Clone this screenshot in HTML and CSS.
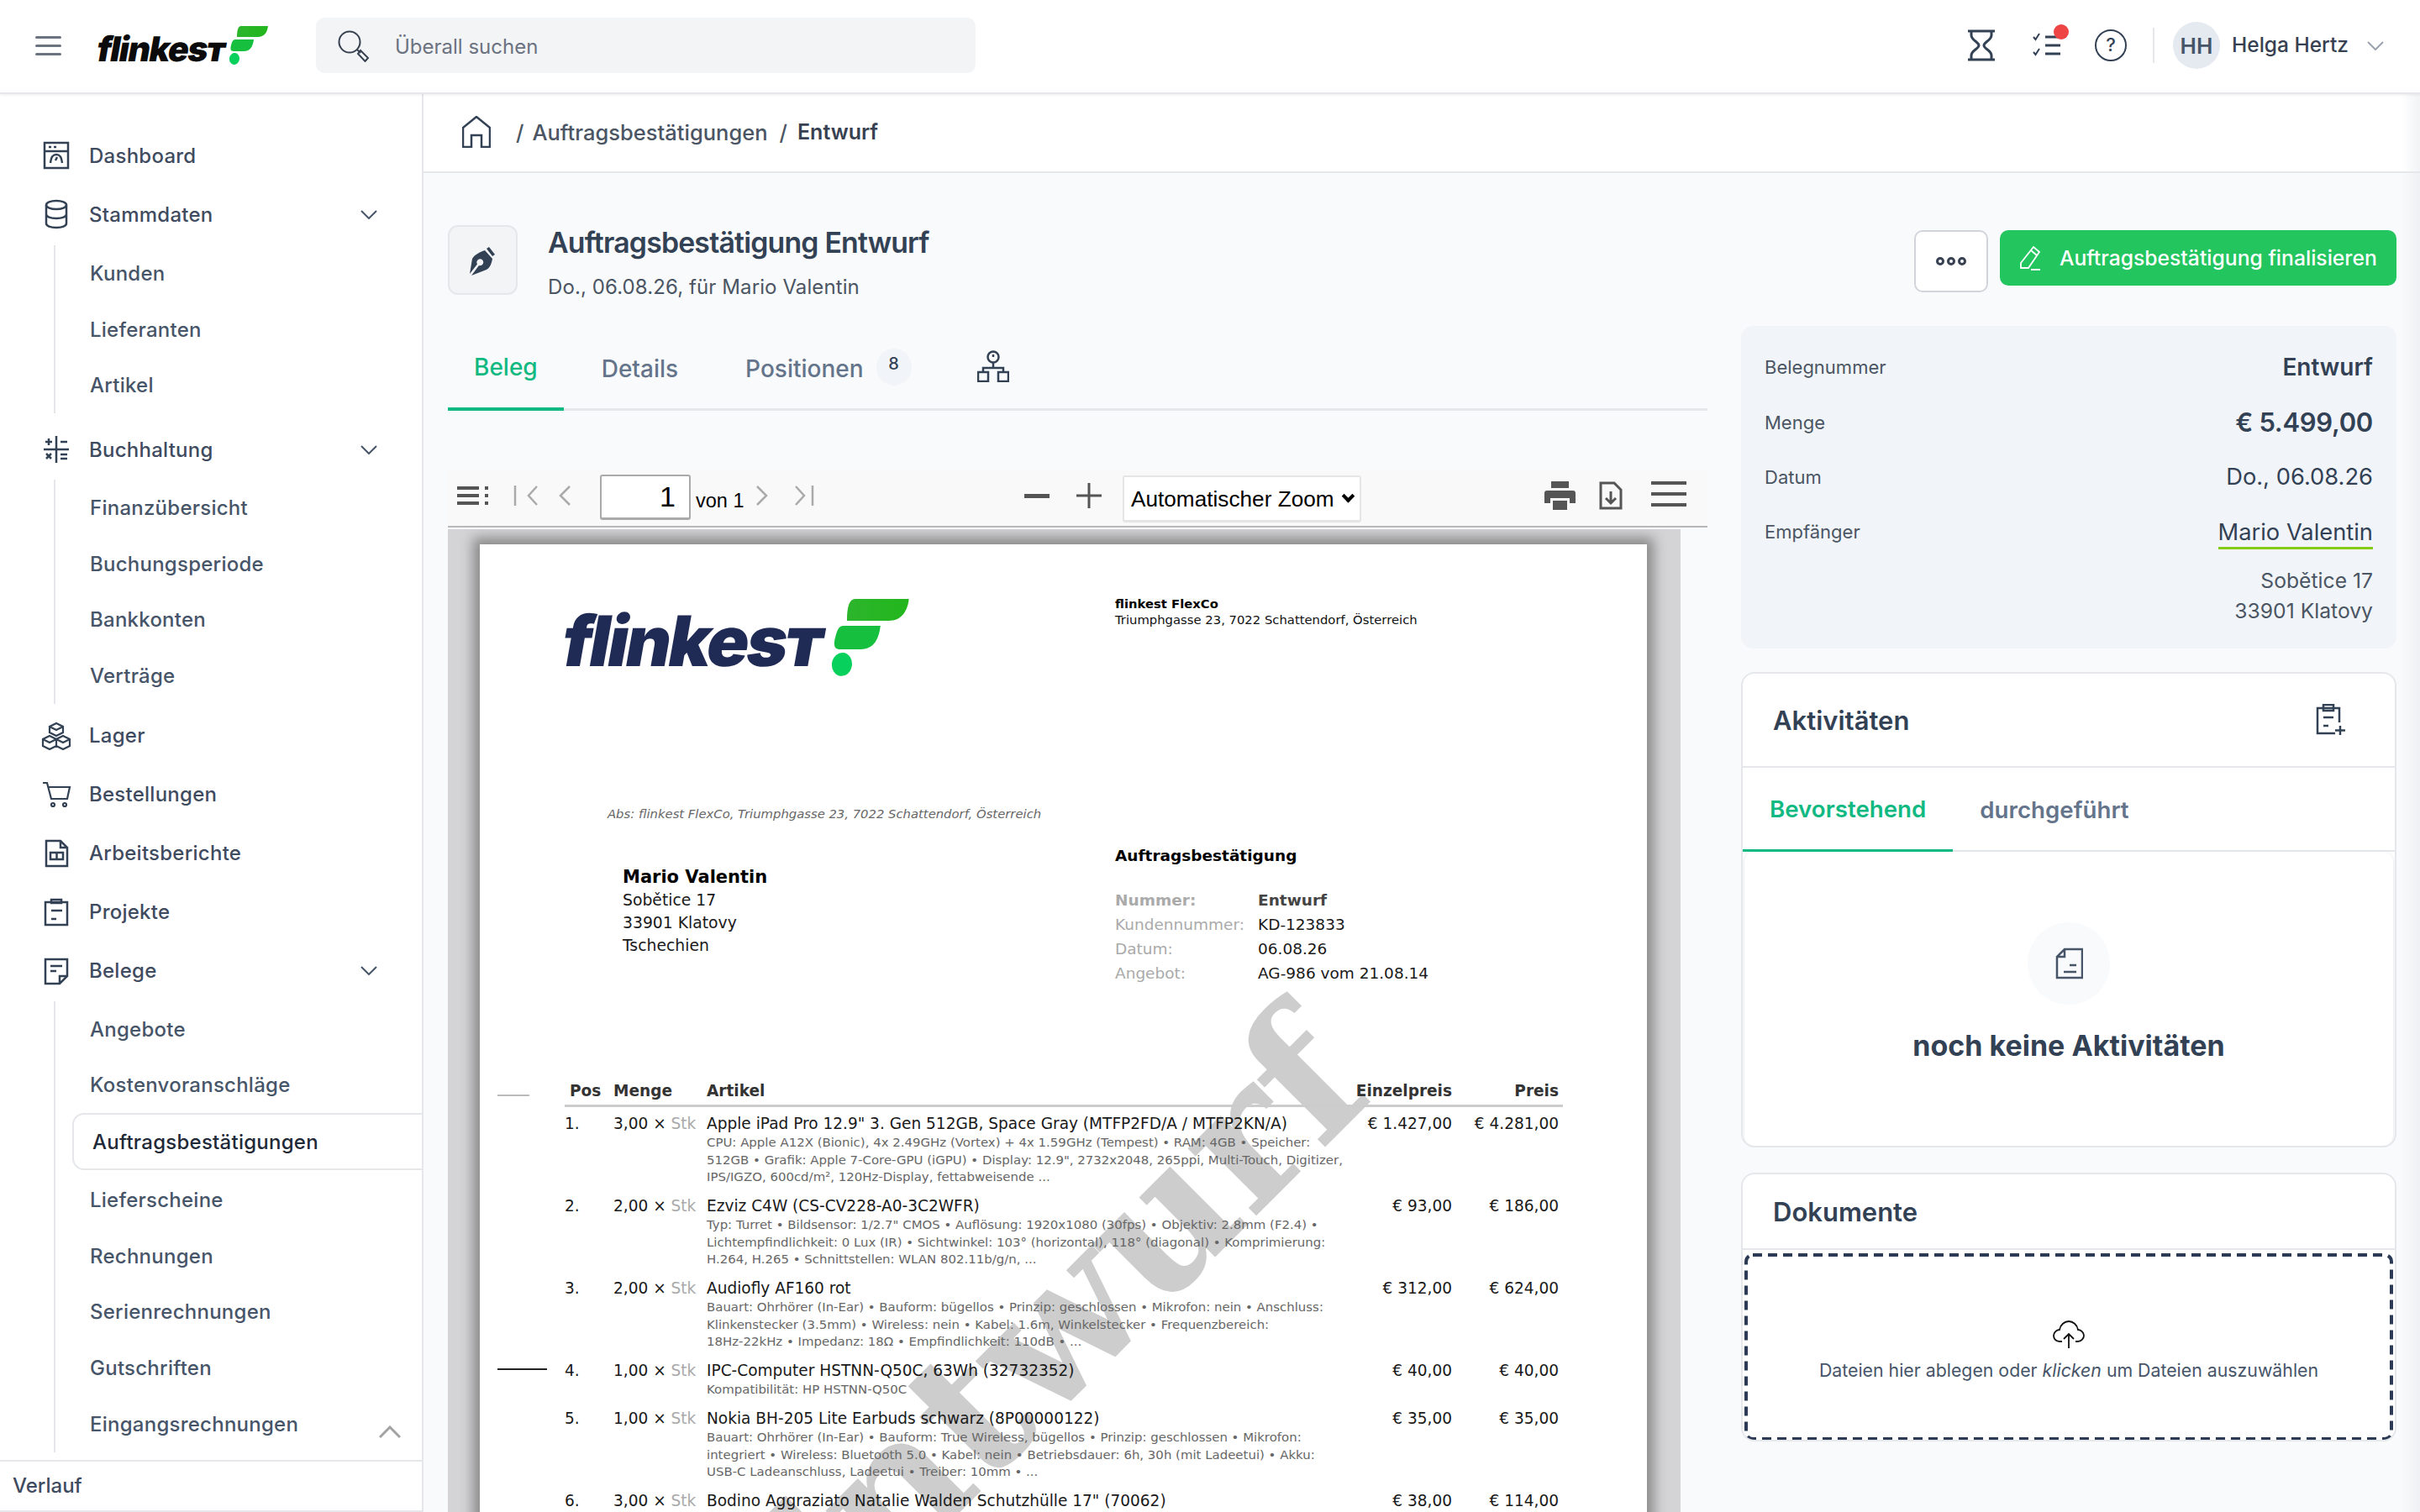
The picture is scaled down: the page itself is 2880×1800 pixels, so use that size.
FILE: index.html
```html
<!DOCTYPE html>
<html lang="de">
  <head>
    <meta charset="UTF-8" />
    <title>Auftragsbestätigung Entwurf</title>
    <link rel="stylesheet" href="styles.css" />
  </head>
  <body>
    <svg class="defs" width="0" height="0">
      <defs>
        <linearGradient id="leafTop" x1="0" y1="0" x2="1" y2="0">
          <stop offset="0" stop-color="#2cb52c" />
          <stop offset="1" stop-color="#22b61c" />
        </linearGradient>
        <symbol id="leaves" viewBox="0 0 47 46">
          <path d="M15 0H47C46 8 42 13 35 13H10C10 6 11 0 15 0Z" fill="url(#leafTop)" />
          <path d="M8 16H30C29 24 26 30 18 30H6C2 30 2 27 3 23C4 19 5 16 8 16Z" fill="#16c03e" />
          <ellipse cx="7" cy="39" rx="6" ry="7" transform="rotate(8 7 39)" fill="#07d15c" />
        </symbol>
      </defs>
    </svg>

    <header class="topbar">
      <div class="burger"><span></span><span></span><span></span></div>
      <div class="logo">
        <span class="logo-text">flinkes<span class="logo-t">t</span></span>
        <svg class="logo-leaves"><use href="#leaves" /></svg>
      </div>
      <div class="search">
        <svg class="search-icon" viewBox="0 0 38 38" fill="none" stroke="#374151" stroke-width="2">
          <circle cx="14" cy="14" r="12.5" />
          <path d="M23 23l4 4M27 24l9 9-3.500 4-8.500-9z" />
        </svg>
        <span>Überall suchen</span>
      </div>
      <div class="top-right">
        <svg class="ti-hour" viewBox="0 0 32 38" fill="none" stroke="#334155" stroke-width="3">
          <path d="M0 2H32M0 36H32M4 2V7C4 13 13 15 13 19C13 23 4 25 4 31V36M28 2V7C28 13 19 15 19 19C19 23 28 25 28 31V36" />
        </svg>
        <div class="tasks">
          <svg viewBox="0 0 34 30" fill="none" stroke="#334155">
            <path d="M15 5H33M15 15H33M15 25H33" stroke-width="3" />
            <path d="M1 5l2.500 3L8 1M1 23l2.500 3L8 19" stroke-width="2" />
          </svg>
          <span class="red-dot"></span>
        </div>
        <div class="help">?</div>
        <div class="divider"></div>
        <div class="avatar">HH</div>
        <span class="user-name">Helga Hertz</span>
        <svg class="chev user-chev" viewBox="0 0 20 11" fill="none" stroke="#9ca3af" stroke-width="2"><path d="M1 1l9 9 9-9" /></svg>
      </div>
    </header>

    <div class="shell">
      <aside class="sidebar">
        <nav class="nav">
          <a class="nav-row">
            <svg class="nav-icon" viewBox="0 0 36 36" fill="none" stroke="#334155" stroke-width="2.500">
              <rect x="4" y="3" width="28" height="30" />
              <path d="M4 13H32" />
              <path d="M9 8h3M15 8h3M11 27c1-9 4-10 7-10s6 1 7 10M17 24l2-4" />
            </svg>
            Dashboard
          </a>
          <a class="nav-row">
            <svg class="nav-icon" viewBox="0 0 36 36" fill="none" stroke="#334155" stroke-width="2.500">
              <ellipse cx="18" cy="7" rx="12" ry="5" />
              <path d="M6 7V29C6 32 11 34 18 34S30 32 30 29V7M6 18C6 21 11 23 18 23S30 21 30 18" />
              <path d="M14 16v.1M14 27v.1" />
            </svg>
            Stammdaten
            <svg class="chev" viewBox="0 0 20 11" fill="none" stroke="#475569" stroke-width="2"><path d="M1 1l9 9 9-9" /></svg>
          </a>
          <div class="sub sub-first">
            <a class="sub-row">Kunden</a>
            <a class="sub-row">Lieferanten</a>
            <a class="sub-row">Artikel</a>
          </div>
          <a class="nav-row">
            <svg class="nav-icon" viewBox="0 0 36 36" fill="none" stroke="#334155" stroke-width="2.500">
              <path d="M18 2V34M3 18H33M5 9h8M9 5v8M23 9h8M6 23l6 6M12 23l-6 6M23 24h8M23 29h8" />
            </svg>
            Buchhaltung
            <svg class="chev" viewBox="0 0 20 11" fill="none" stroke="#475569" stroke-width="2"><path d="M1 1l9 9 9-9" /></svg>
          </a>
          <div class="sub">
            <a class="sub-row">Finanzübersicht</a>
            <a class="sub-row">Buchungsperiode</a>
            <a class="sub-row">Bankkonten</a>
            <a class="sub-row">Verträge</a>
          </div>
          <a class="nav-row">
            <svg class="nav-icon" viewBox="0 0 36 36" fill="none" stroke="#334155" stroke-width="2.200">
              <path d="M18 3l8 4v7l-8 4-8-4V7zM10 7l8 4 8-4M10 18l8 4v8l-8 4-8-4v-8zM2 22l8 4 8-4M26 18l8 4v8l-8 4-8-4v-8zM18 22l8 4 8-4" />
            </svg>
            Lager
          </a>
          <a class="nav-row">
            <svg class="nav-icon" viewBox="0 0 36 36" fill="none" stroke="#334155" stroke-width="2.200">
              <path d="M2 4h5l5 19h19l3-14H8" />
              <circle cx="14" cy="30" r="2" />
              <circle cx="28" cy="30" r="2" />
            </svg>
            Bestellungen
          </a>
          <a class="nav-row">
            <svg class="nav-icon" viewBox="0 0 36 36" fill="none" stroke="#334155" stroke-width="2.500">
              <path d="M6 3H23L31 11V33H6zM23 3V11H31" />
              <path d="M11 17H26V25H11zM18.500 17V25" />
            </svg>
            Arbeitsberichte
          </a>
          <a class="nav-row">
            <svg class="nav-icon" viewBox="0 0 36 36" fill="none" stroke="#334155" stroke-width="2.500">
              <rect x="5" y="6" width="26" height="27" />
              <rect x="12" y="3" width="12" height="4" />
              <path d="M12 16H25M12 26H18" />
            </svg>
            Projekte
          </a>
          <a class="nav-row">
            <svg class="nav-icon" viewBox="0 0 36 36" fill="none" stroke="#334155" stroke-width="2.500">
              <path d="M5 4H31V24L22 33H5zM31 24H22V33M11 12H25M11 18H18" />
            </svg>
            Belege
            <svg class="chev" viewBox="0 0 20 11" fill="none" stroke="#475569" stroke-width="2"><path d="M1 1l9 9 9-9" /></svg>
          </a>
          <div class="sub">
            <a class="sub-row">Angebote</a>
            <a class="sub-row">Kostenvoranschläge</a>
            <a class="sub-row sub-active">Auftragsbestätigungen</a>
            <a class="sub-row">Lieferscheine</a>
            <a class="sub-row">Rechnungen</a>
            <a class="sub-row">Serienrechnungen</a>
            <a class="sub-row">Gutschriften</a>
            <a class="sub-row">Eingangsrechnungen</a>
          </div>
        </nav>
        <svg class="scroll-up" viewBox="0 0 26 15" fill="none" stroke="#a3a3a3" stroke-width="3"><path d="M1 14L13 2l12 12" /></svg>
        <div class="verlauf">Verlauf</div>
      </aside>

      <main class="main">
        <div class="crumbs">
          <svg class="home" viewBox="0 0 34 38" fill="none" stroke="#334155" stroke-width="2.500">
            <path d="M1 37V14L17 1l16 13V37H23V23H11V37z" />
          </svg>
          <span class="sep">/</span>
          <span>Auftragsbestätigungen</span>
          <span class="sep sep2">/</span>
          <strong>Entwurf</strong>
        </div>

        <div class="content">
          <div class="page-head">
            <div class="head-icon">
              <svg viewBox="0 0 36 40" fill="#334155">
                <path d="M24 4l7 9-3 2-7-9zM19 8l9 10c-1 6-3 11-7 13L3 38l9-12a4 4 0 1 0-2-1.500L1 36l3-18c3-5 9-8 15-10z" />
              </svg>
            </div>
            <div class="head-text">
              <h1>Auftragsbestätigung Entwurf</h1>
              <p>Do., 06.08.26, für Mario Valentin</p>
            </div>
            <button class="btn-more"><span></span><span></span><span></span></button>
            <button class="btn-green">
              <svg viewBox="0 0 26 32" fill="none" stroke="#fff" stroke-width="1.800">
                <path d="M2 22L17 3l7 6-13 19H2zM14 7l7 6M14 30h11" />
              </svg>
              Auftragsbestätigung finalisieren
            </button>
          </div>

          <div class="columns">
            <section class="left">
              <div class="tabs">
                <a class="tab tab-on">Beleg</a>
                <a class="tab">Details</a>
                <a class="tab tab-pos">Positionen <span class="count">8</span></a>
                <svg class="tab-org" viewBox="0 0 38 38" fill="none" stroke="#334155" stroke-width="2.500">
                  <circle cx="19" cy="8" r="6.500" />
                  <path d="M19 5v3M19 15V21M7 26V21H31V26" />
                  <rect x="1" y="26" width="12" height="11" />
                  <rect x="25" y="26" width="12" height="11" />
                </svg>
              </div>

              <div class="pdf-bar">
                <svg class="pb-side" viewBox="0 0 37 22" fill="#555">
                  <path d="M0 0h26v4H0zM0 9h26v4H0zM0 18h26v4H0zM33 0h4v4h-4zM33 9h4v4h-4zM33 18h4v4h-4z" />
                </svg>
                <svg class="pb-nav pb-first" viewBox="0 0 30 24" fill="none" stroke="#aaa" stroke-width="2.500"><path d="M2 0V24M28 1L18 12l10 11" /></svg>
                <svg class="pb-nav pb-prev" viewBox="0 0 15 24" fill="none" stroke="#aaa" stroke-width="2.500"><path d="M14 1L3 12l11 11" /></svg>
                <div class="pb-page">1</div>
                <span class="pb-of">von 1</span>
                <svg class="pb-nav pb-next" viewBox="0 0 15 24" fill="none" stroke="#aaa" stroke-width="2.500"><path d="M1 1l11 11L1 23" /></svg>
                <svg class="pb-nav pb-last" viewBox="0 0 24 24" fill="none" stroke="#aaa" stroke-width="2.500"><path d="M22 0V24M2 1l10 11L2 23" /></svg>
                <div class="pb-minus"></div>
                <svg class="pb-plus" viewBox="0 0 30 30" fill="#555"><path d="M13.500 0h3v13.500H30v3H16.500V30h-3V16.500H0v-3h13.500z" /></svg>
                <div class="pb-select">Automatischer Zoom <span class="pb-arrow"></span></div>
                <svg class="pb-print" viewBox="0 0 37 34" fill="#555">
                  <path d="M8 0h21v8H8zM3 11h31a3 3 0 0 1 3 3v12h-7v-6H7v6H0V14a3 3 0 0 1 3-3zM10 23h17v11H10z" />
                </svg>
                <svg class="pb-save" viewBox="0 0 28 34" fill="none" stroke="#555" stroke-width="3">
                  <path d="M2 2H18L26 10V32H2zM14 12V26M8 20l6 6 6-6" />
                </svg>
                <svg class="pb-menu" viewBox="0 0 42 30" fill="#555"><path d="M0 0h42v4H0zM0 13h42v4H0zM0 26h42v4H0z" /></svg>
              </div>

              <div class="viewer">
                <div class="sheet">
                  <div class="mark">Entwurf</div>
                  <div class="fold fold-a"></div>
                  <div class="fold fold-b"></div>

                  <div class="doc-head">
                    <div class="doc-logo">
                      <span class="doc-logo-text">flinkes<span class="logo-t">t</span></span>
                      <svg class="doc-leaves"><use href="#leaves" /></svg>
                    </div>
                    <div class="doc-sender">
                      <b>flinkest FlexCo</b><br />
                      Triumphgasse 23, 7022 Schattendorf, Österreich
                    </div>
                  </div>

                  <div class="doc-abs">Abs: flinkest FlexCo, Triumphgasse 23, 7022 Schattendorf, Österreich</div>

                  <div class="doc-info">
                    <div class="doc-addr">
                      <b>Mario Valentin</b><br />
                      Sobětice 17<br />
                      33901 Klatovy<br />
                      Tschechien
                    </div>
                    <div class="doc-meta">
                      <h2>Auftragsbestätigung</h2>
                      <dl>
                        <dt class="meta-strong">Nummer:</dt><dd class="meta-strong">Entwurf</dd>
                        <dt>Kundennummer:</dt><dd>KD-123833</dd>
                        <dt>Datum:</dt><dd>06.08.26</dd>
                        <dt>Angebot:</dt><dd>AG-986 vom 21.08.14</dd>
                      </dl>
                    </div>
                  </div>

                  <div class="items">
                    <div class="item item-head">
                      <span>Pos</span><span>Menge</span><span>Artikel</span>
                      <span class="num">Einzelpreis</span><span class="num">Preis</span>
                    </div>
                    <div class="item">
                      <span>1.</span><span>3,00 × <i>Stk</i></span>
                      <div>Apple iPad Pro 12.9" 3. Gen 512GB, Space Gray (MTFP2FD/A / MTFP2KN/A)
                        <p>CPU: Apple A12X (Bionic), 4x 2.49GHz (Vortex) + 4x 1.59GHz (Tempest) • RAM: 4GB • Speicher:<br />512GB • Grafik: Apple 7-Core-GPU (iGPU) • Display: 12.9", 2732x2048, 265ppi, Multi-Touch, Digitizer,<br />IPS/IGZO, 600cd/m², 120Hz-Display, fettabweisende ...</p>
                      </div>
                      <span class="num">€ 1.427,00</span><span class="num">€ 4.281,00</span>
                    </div>
                    <div class="item">
                      <span>2.</span><span>2,00 × <i>Stk</i></span>
                      <div>Ezviz C4W (CS-CV228-A0-3C2WFR)
                        <p>Typ: Turret • Bildsensor: 1/2.7" CMOS • Auflösung: 1920x1080 (30fps) • Objektiv: 2.8mm (F2.4) •<br />Lichtempfindlichkeit: 0 Lux (IR) • Sichtwinkel: 103° (horizontal), 118° (diagonal) • Komprimierung:<br />H.264, H.265 • Schnittstellen: WLAN 802.11b/g/n, ...</p>
                      </div>
                      <span class="num">€ 93,00</span><span class="num">€ 186,00</span>
                    </div>
                    <div class="item">
                      <span>3.</span><span>2,00 × <i>Stk</i></span>
                      <div>Audiofly AF160 rot
                        <p>Bauart: Ohrhörer (In-Ear) • Bauform: bügellos • Prinzip: geschlossen • Mikrofon: nein • Anschluss:<br />Klinkenstecker (3.5mm) • Wireless: nein • Kabel: 1.6m, Winkelstecker • Frequenzbereich:<br />18Hz-22kHz • Impedanz: 18Ω • Empfindlichkeit: 110dB • ...</p>
                      </div>
                      <span class="num">€ 312,00</span><span class="num">€ 624,00</span>
                    </div>
                    <div class="item">
                      <span>4.</span><span>1,00 × <i>Stk</i></span>
                      <div>IPC-Computer HSTNN-Q50C, 63Wh (32732352)
                        <p>Kompatibilität: HP HSTNN-Q50C</p>
                      </div>
                      <span class="num">€ 40,00</span><span class="num">€ 40,00</span>
                    </div>
                    <div class="item">
                      <span>5.</span><span>1,00 × <i>Stk</i></span>
                      <div>Nokia BH-205 Lite Earbuds schwarz (8P00000122)
                        <p>Bauart: Ohrhörer (In-Ear) • Bauform: True Wireless, bügellos • Prinzip: geschlossen • Mikrofon:<br />integriert • Wireless: Bluetooth 5.0 • Kabel: nein • Betriebsdauer: 6h, 30h (mit Ladeetui) • Akku:<br />USB-C Ladeanschluss, Ladeetui • Treiber: 10mm • ...</p>
                      </div>
                      <span class="num">€ 35,00</span><span class="num">€ 35,00</span>
                    </div>
                    <div class="item">
                      <span>6.</span><span>3,00 × <i>Stk</i></span>
                      <div>Bodino Aggraziato Natalie Walden Schutzhülle 17" (70062)</div>
                      <span class="num">€ 38,00</span><span class="num">€ 114,00</span>
                    </div>
                  </div>
                </div>
              </div>
            </section>

            <section class="right">
              <div class="summary">
                <div class="sum-row"><span>Belegnummer</span><b class="sum-big">Entwurf</b></div>
                <div class="sum-row"><span>Menge</span><b class="sum-amount">€ 5.499,00</b></div>
                <div class="sum-row"><span>Datum</span><em>Do., 06.08.26</em></div>
                <div class="sum-row sum-to"><span>Empfänger</span><em class="sum-link">Mario Valentin</em></div>
                <div class="sum-addr">Sobětice 17<br />33901 Klatovy</div>
              </div>

              <div class="card card-act">
                <div class="card-head">
                  <h3>Aktivitäten</h3>
                  <svg class="act-add" viewBox="0 0 36 38" fill="none" stroke="#334155" stroke-width="2.500">
                    <path d="M23 35H2V5H28V22" />
                    <rect x="9" y="1" width="12" height="7" />
                    <path d="M9 16H21M9 26H15M29 26V37M23 31.500H35" />
                  </svg>
                </div>
                <div class="act-tabs">
                  <a class="act-tab act-on">Bevorstehend</a>
                  <a class="act-tab">durchgeführt</a>
                </div>
                <div class="act-body">
                  <div class="empty-icon">
                    <svg viewBox="0 0 33 38" fill="none" stroke="#475569" stroke-width="2.500">
                      <path d="M11 2H32V36H2V11zM11 2V11H2M17 21H25M10 29H25" />
                    </svg>
                  </div>
                  <div class="empty-text">noch keine Aktivitäten</div>
                </div>
              </div>

              <div class="card card-docs">
                <div class="card-head docs-head"><h3>Dokumente</h3></div>
                <div class="drop">
                  <svg class="drop-line"><rect class="drop-rect" /></svg>
                  <svg class="cloud" viewBox="0 0 38 34" fill="none" stroke="#111" stroke-width="1.800">
                    <path d="M11 25H8C3 25 1 21 1 18S4 11 8 11C9 5 14 1 19 1S29 5 30 11C34 11 37 15 37 18S34 25 30 25H27" />
                    <path d="M19 33V16M13 22l6-6 6 6" />
                  </svg>
                  <div>Dateien hier ablegen oder <i>klicken</i> um Dateien auszuwählen</div>
                </div>
              </div>
            </section>
          </div>
        </div>
        <div class="edge"></div>
      </main>
    </div>
  </body>
</html>
```

FILE: styles.css
```css
* {
  box-sizing: border-box;
}

html,
body {
  margin: 0;
  height: 1800px;
  overflow: hidden;
}

body {
  font-family: Inter, "Noto Sans", sans-serif;
  font-size: 24px;
  color: #374151;
  background: #fff;
  display: flex;
  flex-direction: column;
}

.defs {
  position: absolute;
}

/* top bar */
.topbar {
  height: 112px;
  flex: none;
  display: flex;
  align-items: center;
  padding: 0 43px 2px 42px;
  border-bottom: 2px solid #e5e7eb;
  box-shadow: 0 1px 3px rgba(0, 0, 0, 0.08);
  position: relative;
  z-index: 2;
  background: #fff;
}

.burger {
  width: 31px;
  display: flex;
  flex-direction: column;
  gap: 7px;
}

.burger span {
  height: 3px;
  background: #6b7280;
  border-radius: 2px;
}

.logo {
  margin-left: 39px;
  width: 207px;
  height: 46px;
  display: flex;
  align-items: flex-start;
}

.logo-text {
  font-family: Inter, sans-serif;
  font-weight: 900;
  font-size: 41px;
  line-height: 46px;
  letter-spacing: -1.500px;
  color: #0b0b0b;
  width: 160px;
  margin-top: 4px;
  transform: skewX(-10deg);
  transform-origin: left bottom;
  white-space: nowrap;
}

.logo-t {
  font-variant: small-caps;
}

.logo-leaves {
  width: 47px;
  height: 46px;
}

.search {
  margin-left: 57px;
  width: 785px;
  height: 66px;
  border-radius: 10px;
  background: #f3f4f6;
  display: flex;
  align-items: center;
  padding: 2px 0 0 26px;
  color: #6b7280;
}

.search-icon {
  width: 38px;
  height: 38px;
  margin-right: 30px;
}

.top-right {
  margin-left: auto;
  display: flex;
  align-items: center;
}

.ti-hour {
  width: 32px;
  height: 38px;
}

.tasks {
  position: relative;
  margin-left: 45px;
  width: 34px;
  height: 30px;
}

.tasks svg {
  width: 34px;
  height: 30px;
  display: block;
}

.red-dot {
  position: absolute;
  top: -10px;
  right: -9px;
  width: 18px;
  height: 18px;
  border-radius: 50%;
  background: #ef4444;
}

.help {
  margin-left: 40px;
  width: 38px;
  height: 38px;
  border: 2.500px solid #334155;
  border-radius: 50%;
  font-size: 22px;
  font-weight: 500;
  line-height: 33px;
  text-align: center;
  color: #334155;
}

.divider {
  margin-left: 31px;
  width: 2px;
  height: 42px;
  background: #e5e7eb;
}

.avatar {
  margin-left: 22px;
  width: 56px;
  height: 56px;
  border-radius: 50%;
  background: #e5e9f0;
  font-size: 26px;
  font-weight: 600;
  line-height: 58px;
  text-align: center;
  color: #475569;
}

.user-name {
  margin-left: 14px;
  margin-bottom: 2px;
  font-size: 24.500px;
  font-weight: 500;
}

.chev {
  width: 20px;
  height: 11px;
  margin-left: auto;
  flex: none;
}

.user-chev {
  margin-left: 22px;
}

.shell {
  flex: 1;
  display: flex;
  min-height: 0;
}

/* sidebar */
.sidebar {
  width: 504px;
  flex: none;
  border-right: 2px solid #e5e7eb;
  display: flex;
  flex-direction: column;
  position: relative;
  background: #fff;
}

.nav {
  flex: 1;
  padding-top: 38px;
  overflow: hidden;
}

.nav-row {
  height: 70px;
  display: flex;
  align-items: center;
  padding: 0 53px 0 49px;
  color: #3f4b5f;
  font-weight: 500;
  letter-spacing: 0.250px;
}

.nav-icon {
  width: 36px;
  height: 36px;
  margin-right: 21px;
  flex: none;
}

.sub {
  margin: 1px 0 3px 64px;
  border-left: 2px solid #e5e7eb;
}

.sub-first {
  margin: 2px 0 8px 64px;
}

.sub-row {
  height: 66.700px;
  display: flex;
  align-items: center;
  padding-left: 41px;
  color: #475569;
  font-weight: 500;
  letter-spacing: 0.250px;
}

.sub-active {
  margin-left: 20px;
  margin-bottom: 2px;
  padding-left: 22px;
  height: 68px;
  border: 2px solid #e5e7eb;
  border-right: 0;
  border-radius: 14px 0 0 14px;
  color: #1f2937;
}

.scroll-up {
  position: absolute;
  left: 451px;
  top: 1585px;
  width: 26px;
  height: 15px;
}

.verlauf {
  height: 62px;
  flex: none;
  border-top: 2px solid #e5e7eb;
  border-bottom: 2px solid #e5e7eb;
  padding-left: 15px;
  line-height: 58px;
  color: #3f4b5f;
  font-weight: 500;
  background: #fff;
}

/* main column */
.main {
  flex: 1;
  min-width: 0;
  display: flex;
  flex-direction: column;
  background: #f9fafb;
  position: relative;
}

.crumbs {
  height: 94px;
  flex: none;
  background: #fff;
  border-bottom: 2px solid #e5e7eb;
  display: flex;
  align-items: center;
  padding-left: 46px;
  padding-bottom: 2px;
  color: #4b5563;
  font-size: 25.500px;
  font-weight: 500;
}

.home {
  width: 34px;
  height: 38px;
}

.sep {
  margin: 0 10px 0 30px;
}

.sep2 {
  margin: 0 12px 0 14px;
}

.crumbs strong {
  font-size: 25px;
  font-weight: 600;
  color: #374151;
}

.content {
  flex: 1;
  padding: 62px 28px 0 29px;
  overflow: hidden;
}

.edge {
  position: absolute;
  top: 0;
  right: 0;
  bottom: 0;
  width: 22px;
  background: linear-gradient(to right, rgba(229, 231, 235, 0), rgba(229, 231, 235, 0.5));
}

.page-head {
  display: flex;
  align-items: flex-start;
  height: 120px;
}

.head-icon {
  width: 83px;
  height: 83px;
  border: 2px solid #e5e7eb;
  border-radius: 12px;
  background: #f3f4f6;
  display: flex;
  align-items: center;
  justify-content: center;
  padding-left: 3px;
}

.head-icon svg {
  width: 36px;
  height: 40px;
}

.head-text {
  margin-left: 36px;
}

.head-text h1 {
  margin: 0;
  font-size: 33.800px;
  font-weight: 600;
  letter-spacing: -0.800px;
  line-height: 42px;
  color: #334155;
}

.head-text p {
  margin: 17px 0 0;
  color: #4b5563;
  line-height: 30px;
  letter-spacing: 0.100px;
}

.btn-more {
  margin-left: auto;
  margin-top: 6px;
  width: 88px;
  height: 74px;
  border: 2px solid #d1d5db;
  border-radius: 10px;
  background: #fff;
  display: flex;
  align-items: center;
  justify-content: center;
  gap: 3px;
  padding: 0;
}

.btn-more span {
  width: 10px;
  height: 10px;
  border: 3px solid #374151;
  border-radius: 50%;
}

.btn-green {
  margin-left: 14px;
  margin-top: 6px;
  width: 472px;
  height: 66px;
  border: 0;
  border-radius: 10px;
  background: #22c55e;
  color: #fff;
  font: 500 24.700px Inter, sans-serif;
  display: flex;
  align-items: center;
  padding: 0 0 0 23px;
}

.btn-green svg {
  width: 26px;
  height: 32px;
  margin-right: 22px;
}

.columns {
  display: flex;
  gap: 40px;
}

.left {
  width: 1499px;
  flex: none;
}

.right {
  flex: 1;
  min-width: 0;
  margin-right: 0;
}

/* tabs */
.tabs {
  height: 101px;
  border-bottom: 3px solid #e5e7eb;
  display: flex;
  align-items: center;
}

.tab {
  height: 100%;
  display: flex;
  align-items: center;
  padding: 0 31px;
  font-size: 28px;
  font-weight: 500;
  color: #64748b;
  margin-bottom: -3px;
}

.tab-on {
  color: #10b981;
  border-bottom: 4px solid #10b981;
  margin-right: 14px;
  height: 101px;
}

.tab-pos {
  margin-left: 18px;
  padding-right: 0;
  gap: 15px;
}

.count {
  width: 42px;
  height: 44px;
  margin-top: -4px;
  border-radius: 50%;
  background: #f1f5f9;
  color: #334155;
  font-size: 20px;
  line-height: 36px;
  text-align: center;
}

.tab-org {
  width: 38px;
  height: 38px;
  margin-left: 78px;
  margin-top: -2px;
}

/* pdf viewer toolbar */
.pdf-bar {
  margin-top: 71px;
  height: 68px;
  background: #f9f9fa;
  border-bottom: 2px solid #b8b8b8;
  display: flex;
  align-items: center;
  font-family: "Liberation Sans", Arial, sans-serif;
  color: #000;
  padding: 0 0 6px 11px;
}

.pb-side {
  width: 37px;
  height: 22px;
}

.pb-nav {
  width: 30px;
  height: 24px;
  flex: none;
}

.pb-first {
  margin-left: 30px;
}

.pb-prev {
  width: 15px;
  margin-left: 23px;
}

.pb-page {
  margin-left: 35px;
  margin-top: 4px;
  width: 108px;
  height: 54px;
  border: 2px solid #aaa;
  border-bottom-width: 3px;
  border-radius: 3px;
  background: #fff;
  font-size: 34px;
  line-height: 48px;
  text-align: right;
  padding-right: 16px;
}

.pb-of {
  margin-left: 6px;
  margin-top: 12px;
  font-size: 23.500px;
  width: 57px;
  white-space: nowrap;
}

.pb-next {
  width: 15px;
  margin-left: 15px;
}

.pb-last {
  width: 24px;
  margin-left: 30px;
}

.pb-minus {
  margin-left: 250px;
  width: 30px;
  height: 5px;
  background: #555;
}

.pb-plus {
  margin-left: 32px;
  width: 30px;
  height: 30px;
}

.pb-select {
  margin-left: 25px;
  width: 284px;
  height: 56px;
  margin-top: 8px;
  border: 2px solid #e5e5e5;
  border-bottom-width: 3px;
  border-radius: 3px;
  background: #fff;
  font-size: 26.200px;
  line-height: 50px;
  padding-left: 8px;
  white-space: nowrap;
  display: flex;
  align-items: center;
  justify-content: space-between;
  padding-right: 8px;
}

.pb-arrow {
  width: 11px;
  height: 11px;
  border-right: 4px solid #000;
  border-bottom: 4px solid #000;
  transform: rotate(45deg) translate(-2px, -2px);
}

.pb-print {
  margin-left: 218px;
  width: 37px;
  height: 34px;
}

.pb-save {
  margin-left: 28px;
  width: 28px;
  height: 34px;
}

.pb-menu {
  margin-left: 34px;
  width: 42px;
  height: 30px;
  margin-bottom: 4px;
}

.viewer {
  margin-top: 2px;
  width: 1467px;
  height: 1200px;
  background: #d4d4d7;
  overflow: hidden;
  padding: 18px 38px 0;
}

/* the rendered document */
.sheet {
  background: #fff;
  width: 1389px;
  height: 1300px;
  box-shadow: 0 0 14px 8px #8a8a8a;
  position: relative;
  font-family: "DejaVu Sans", sans-serif;
  color: #1a1a1a;
  overflow: hidden;
}

.mark {
  position: absolute;
  left: 169px;
  top: 841px;
  font-family: "DejaVu Serif", serif;
  font-weight: 700;
  font-size: 220px;
  line-height: 1;
  color: #cdcdcd;
  transform: rotate(-45deg);
  transform-origin: center;
  white-space: nowrap;
}

.fold {
  position: absolute;
  left: 21px;
  height: 2px;
}

.fold-a {
  top: 655px;
  width: 38px;
  background: #bbb;
}

.fold-b {
  top: 981px;
  width: 59px;
  background: #222;
}

.doc-head {
  display: flex;
  position: relative;
  height: 311px;
  padding: 62px 0 0 92px;
}

.doc-logo {
  width: 419px;
  height: 93px;
  display: flex;
  align-items: flex-start;
  margin-top: 3px;
}

.doc-logo-text {
  font-family: Inter, sans-serif;
  font-weight: 900;
  font-size: 83px;
  line-height: 92px;
  letter-spacing: -3px;
  color: #1f2a55;
  width: 326px;
  margin-top: 4px;
  transform: skewX(-10deg);
  transform-origin: left bottom;
  white-space: nowrap;
}

.doc-leaves {
  width: 94px;
  height: 92px;
}

.doc-sender {
  margin-left: 245px;
  margin-top: -1px;
  font-size: 14.800px;
  line-height: 19px;
  color: #111;
}

.doc-sender b,
.doc-addr b {
  color: #000;
}

.doc-abs {
  margin: 0 0 0 152px;
  font-size: 14.800px;
  font-style: italic;
  color: #666;
  line-height: 20px;
}

.doc-info {
  display: flex;
  position: relative;
  height: 308px;
  padding-left: 170px;
  margin-top: 0;
}

.doc-addr {
  width: 586px;
  padding-top: 52px;
  font-size: 18.800px;
  line-height: 27px;
}

.doc-addr b {
  font-size: 21px;
}

.doc-meta {
  padding-top: 28px;
}

.doc-meta h2 {
  margin: 0 0 26px;
  font-size: 18.500px;
  line-height: 24px;
  color: #000;
}

.doc-meta dl {
  margin: 0;
  display: grid;
  grid-template-columns: 170px auto;
  font-size: 18.500px;
  line-height: 29px;
}

.doc-meta dt {
  color: #aaa;
}

.doc-meta dd {
  margin: 0;
}

.meta-strong {
  font-weight: 700;
}

.doc-meta dd.meta-strong {
  color: #444;
}

.items {
  position: relative;
  margin-left: 101px;
  width: 1188px;
  font-size: 18.550px;
}

.item {
  display: grid;
  grid-template-columns: 58px 111px 762px 125px 127px;
  line-height: 24px;
  margin-bottom: 12.500px;
}

.item-head {
  font-weight: 700;
  color: #333;
  border-bottom: 3px solid #ccc;
  padding-bottom: 4px;
  margin-bottom: 8px;
}

.item-head span:first-child {
  padding-left: 6px;
}

.item .num {
  text-align: right;
}

.item i {
  font-style: normal;
  color: #aaa;
}

.item p {
  margin: 0;
  font-size: 14.950px;
  line-height: 20.500px;
  color: #666;
  white-space: nowrap;
}

/* right column */
.summary {
  height: 384px;
  border-radius: 14px;
  background: #f1f5f9;
  padding: 30px 28px 0 28px;
  color: #4b5563;
  font-size: 22px;
}

.sum-row {
  height: 65.500px;
  display: flex;
  justify-content: space-between;
  align-items: flex-start;
  line-height: 38px;
}

.sum-row b,
.sum-row em {
  font-size: 27.300px;
  font-style: normal;
  color: #334155;
}

.sum-row em {
  font-weight: 400;
}

.sum-row .sum-big {
  font-size: 28px;
  font-weight: 600;
}

.sum-row .sum-amount {
  font-size: 31px;
  font-weight: 600;
  letter-spacing: -0.300px;
}

.sum-to {
  height: 58px;
}

.sum-to span {
  margin-top: -1px;
}

.sum-link {
  border-bottom: 3px solid #84cc16;
  line-height: 35px;
  margin-top: 1px;
}

.sum-addr {
  text-align: right;
  font-size: 24.700px;
  line-height: 36px;
  color: #4b5563;
}

.card {
  background: #fff;
  border: 2px solid #e5e7eb;
  border-radius: 16px;
  overflow: hidden;
}

.card-act {
  margin-top: 28px;
  height: 566px;
}

.card-docs {
  margin-top: 30px;
  height: 320px;
}

.card-head {
  height: 112px;
  display: flex;
  align-items: center;
  justify-content: space-between;
  padding: 0 58px 0 36px;
  border-bottom: 2px solid #e5e7eb;
}

.card-head h3 {
  margin: 0;
  font-size: 31px;
  font-weight: 600;
  color: #334155;
}

.act-add {
  width: 36px;
  height: 38px;
}

.act-tabs {
  height: 100px;
  display: flex;
  border-bottom: 2px solid #e5e7eb;
}

.act-tab {
  display: flex;
  align-items: center;
  height: 100px;
  padding: 0 32px;
  font-size: 27.700px;
  font-weight: 600;
  color: #64748b;
}

.act-on {
  color: #10b981;
  border-bottom: 3px solid #10b981;
}

.act-body {
  height: 350px;
  margin: 0 2px;
  border-radius: 12px;
  box-shadow: 0 1px 4px #d8dde5;
  display: flex;
  flex-direction: column;
  align-items: center;
  padding-top: 84px;
}

.empty-icon {
  width: 98px;
  height: 98px;
  border-radius: 50%;
  background: #f9fafb;
  display: flex;
  align-items: center;
  justify-content: center;
}

.empty-icon svg {
  width: 33px;
  height: 38px;
}

.empty-text {
  margin-top: 28px;
  font-size: 34px;
  font-weight: 700;
  color: #334155;
}

.docs-head {
  height: 90px;
}

.drop {
  position: relative;
  margin: 4px 2px 0;
  height: 223px;
  display: flex;
  flex-direction: column;
  align-items: center;
  justify-content: center;
  font-size: 21.300px;
  color: #475569;
  padding-top: 8px;
}

.drop-line {
  position: absolute;
  inset: 0;
  width: 100%;
  height: 100%;
}

.drop-rect {
  x: 2px;
  y: 2px;
  width: calc(100% - 4px);
  height: calc(100% - 4px);
  rx: 8px;
  fill: none;
  stroke: #2d3a55;
  stroke-width: 4px;
  stroke-dasharray: 11px 7px;
}

.cloud {
  width: 38px;
  height: 34px;
  margin-bottom: 12px;
}
```
